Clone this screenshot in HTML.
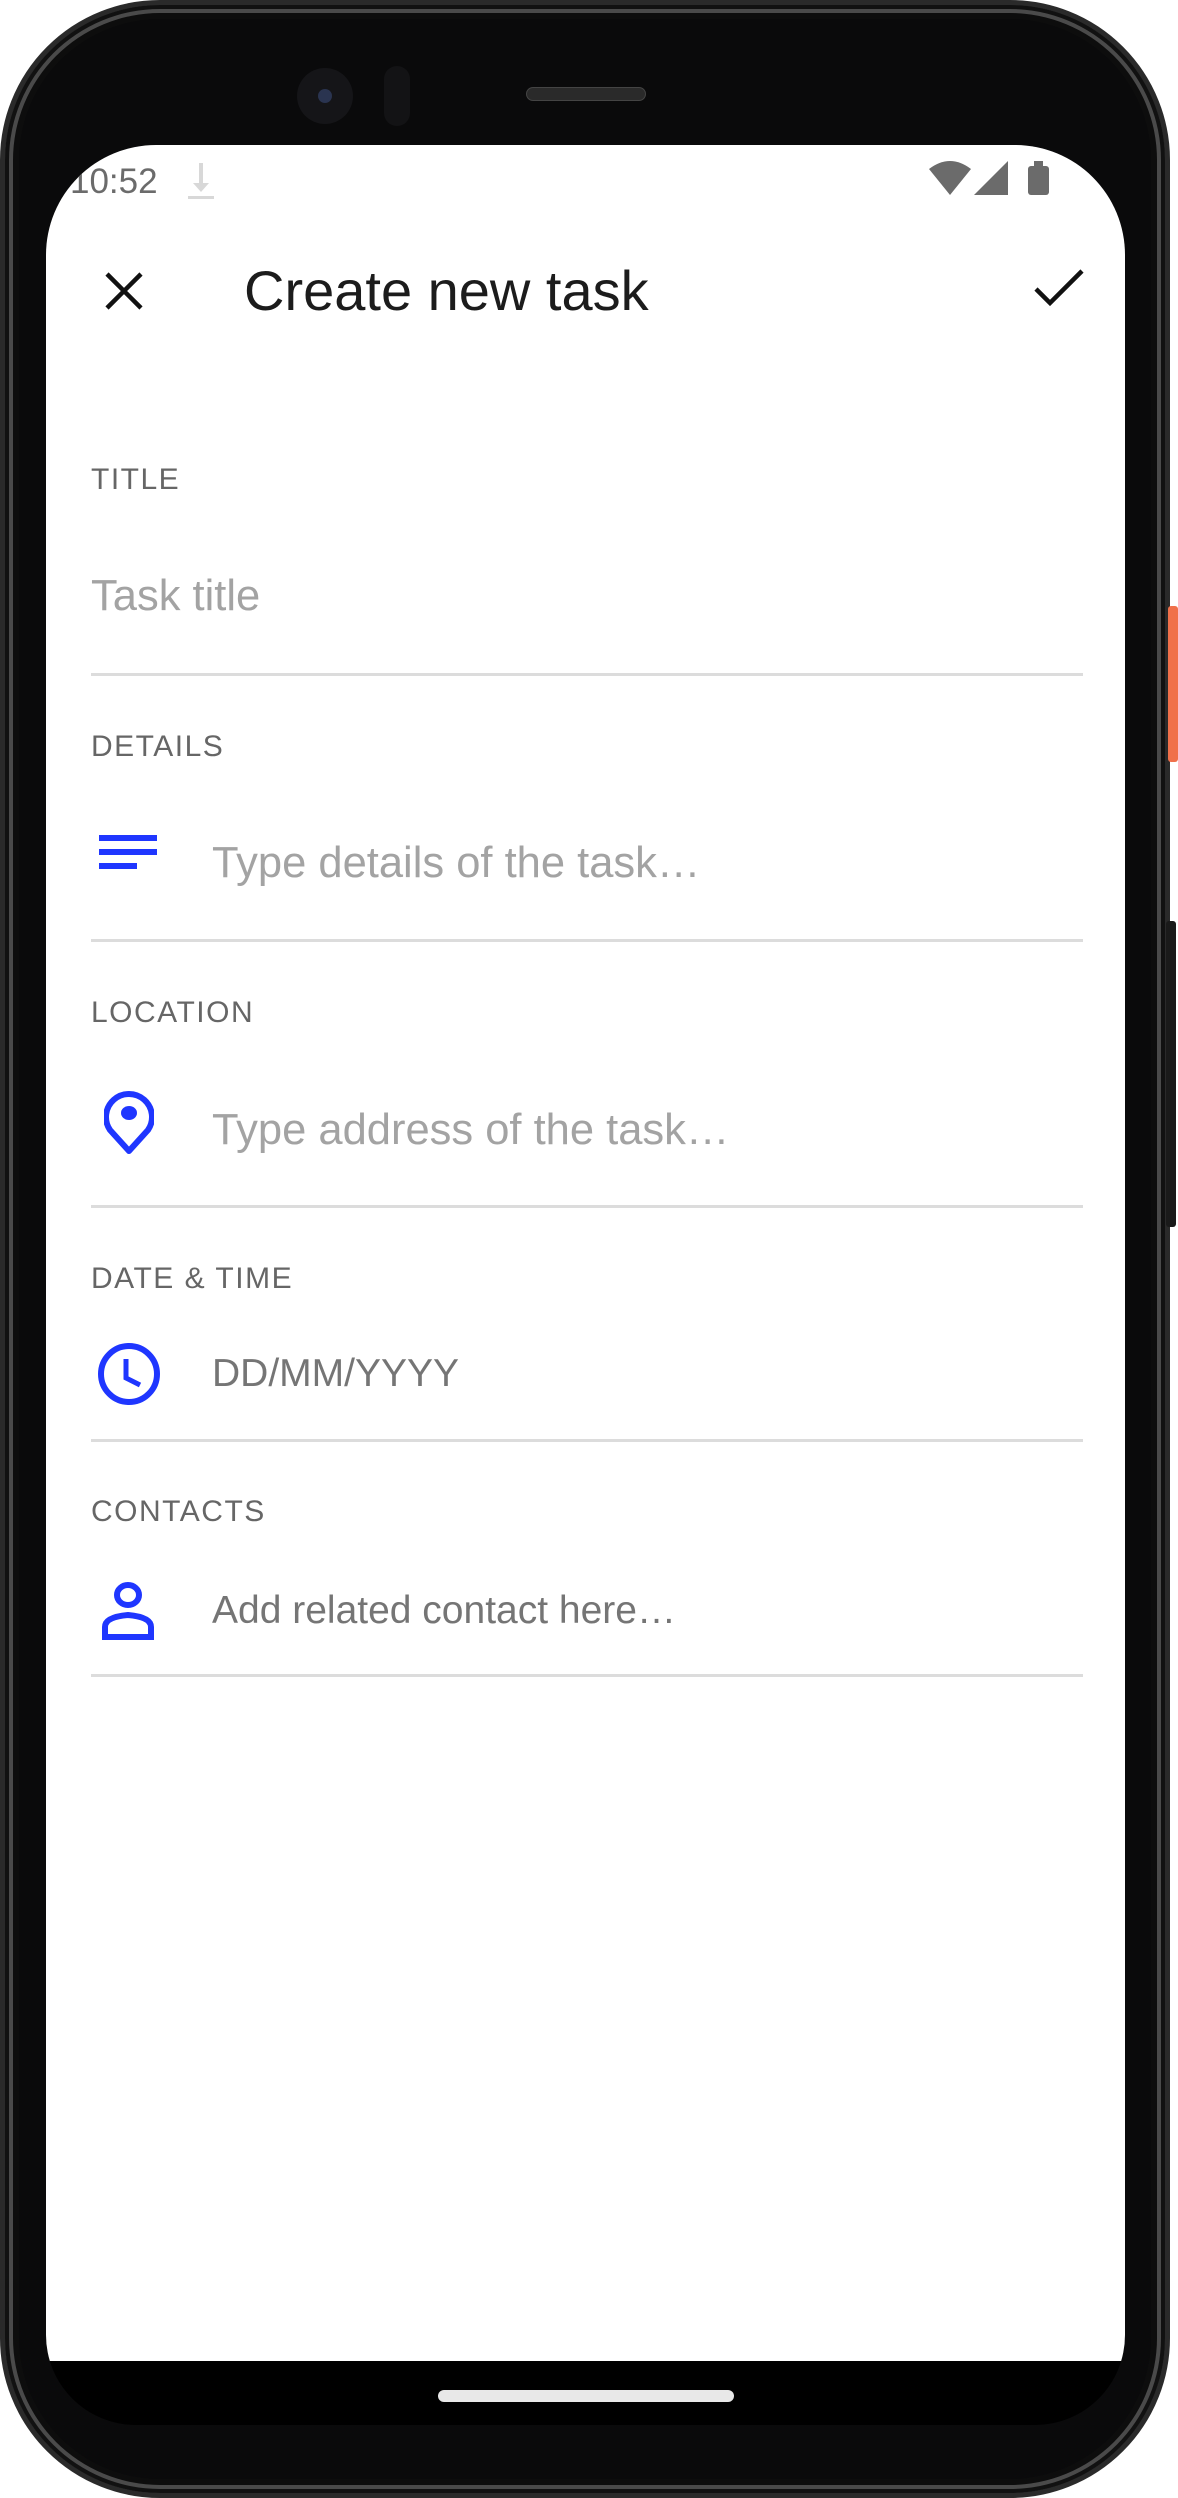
<!DOCTYPE html>
<html><head><style>
*{margin:0;padding:0;box-sizing:border-box}
body{width:1178px;height:2498px;background:#fff;position:relative;overflow:hidden;font-family:"Liberation Sans",sans-serif}
.abs{position:absolute}
.phone{left:0;top:0;width:1170px;height:2498px;border-radius:160px;background:#0a0a0b;border:5px solid #2a2a2a;box-shadow:inset 0 0 0 4px #111,inset 0 0 0 8px #4a4a4a,inset 0 0 0 14px #0d0d0d}
.screen{left:46px;top:145px;width:1079px;height:2280px;border-radius:110px 110px 90px 90px;background:#000;overflow:hidden}
.white{left:0;top:0;width:1079px;height:2216px;background:#fff}
.lbl{left:45px;font-size:30px;color:#666;letter-spacing:1.5px}
.ph{font-size:43.5px;color:#a3a3a3}
.val{font-size:39px;color:#757575}
.div{left:45px;width:992px;height:3px;background:#dcdcdc}
</style></head><body>
<div class="abs phone"></div>
<div class="abs" style="left:1168px;top:606px;width:10px;height:156px;background:#f0704a;border-radius:3px"></div>
<div class="abs" style="left:1166px;top:921px;width:10px;height:306px;background:#1a1a1a;border-radius:3px"></div>
<div class="abs" style="left:297px;top:68px;width:56px;height:56px;border-radius:50%;background:#151518"></div>
<div class="abs" style="left:318px;top:89px;width:14px;height:14px;border-radius:50%;background:#2a3450"></div>
<div class="abs" style="left:384px;top:66px;width:26px;height:60px;border-radius:13px;background:#131315"></div>
<div class="abs" style="left:526px;top:87px;width:120px;height:14px;border-radius:7px;background:#2a2a2a;border:1px solid #444"></div>
<div class="abs screen">
 <div class="abs white">
  <div class="abs" style="left:24px;top:17px;font-size:35px;color:#6b6b6b">10:52</div>
  <svg class="abs" style="left:140px;top:16px" width="30" height="40" viewBox="0 0 30 40"><path d="M13 2h4v20h6l-8 9-8-9h6z" fill="#d8d8d8"/><rect x="2" y="35" width="26" height="3" fill="#d8d8d8"/></svg>
  <svg class="abs" style="left:883px;top:14px" width="125" height="38" viewBox="0 0 125 38"><path d="M0 10 Q21 -6 42 10 L21 36 Z" fill="#6b6b6b"/><path d="M45 36 L79 2 L79 36 Z" fill="#6b6b6b"/><rect x="99" y="7" width="21" height="29" rx="3" fill="#6b6b6b"/><rect x="105" y="2" width="9" height="6" fill="#6b6b6b"/></svg>
  <svg class="abs" style="left:58px;top:126px" width="40" height="40" viewBox="0 0 40 40"><path d="M3 3L37 37M37 3L3 37" stroke="#111" stroke-width="4.5"/></svg>
  <div class="abs" style="left:198px;top:113px;font-size:56px;color:#1c1c1c">Create new task</div>
  <svg class="abs" style="left:988px;top:124px" width="50" height="40" viewBox="0 0 50 40"><path d="M2 20L16 34L48 2" stroke="#111" stroke-width="4.5" fill="none"/></svg>

  <div class="abs lbl" style="top:318px">TITLE</div>
  <div class="abs ph" style="left:45px;top:427px">Task title</div>
  <div class="abs div" style="top:528px"></div>

  <div class="abs lbl" style="top:585px">DETAILS</div>
  <svg class="abs" style="left:53px;top:690px" width="60" height="40" viewBox="0 0 60 40"><rect x="0" y="0" width="58" height="6" fill="#1f36ff"/><rect x="0" y="14" width="58" height="6" fill="#1f36ff"/><rect x="0" y="28" width="38" height="6" fill="#1f36ff"/></svg>
  <div class="abs ph" style="left:166px;top:694px">Type details of the task…</div>
  <div class="abs div" style="top:794px"></div>

  <div class="abs lbl" style="top:851px">LOCATION</div>
  <svg class="abs" style="left:58px;top:946px" width="50" height="66" viewBox="0 0 50 66"><path d="M25 60 L6 39 A23 23 0 1 1 44 39 Z" fill="none" stroke="#1f36ff" stroke-width="6" stroke-linejoin="round"/><ellipse cx="25" cy="22" rx="8" ry="7" fill="#1f36ff"/></svg>
  <div class="abs ph" style="left:166px;top:961px">Type address of the task…</div>
  <div class="abs div" style="top:1060px"></div>

  <div class="abs lbl" style="top:1117px">DATE &amp; TIME</div>
  <svg class="abs" style="left:50px;top:1196px" width="66" height="66" viewBox="0 0 66 66"><circle cx="33" cy="33" r="28" fill="none" stroke="#1f36ff" stroke-width="6"/><path d="M30 18V37L44 44" fill="none" stroke="#1f36ff" stroke-width="5"/></svg>
  <div class="abs val" style="left:166px;top:1207px">DD/MM/YYYY</div>
  <div class="abs div" style="top:1294px"></div>

  <div class="abs lbl" style="top:1350px">CONTACTS</div>
  <svg class="abs" style="left:56px;top:1436px" width="52" height="60" viewBox="0 0 52 60"><ellipse cx="26" cy="14" rx="11" ry="10" fill="none" stroke="#1f36ff" stroke-width="6"/><path d="M3 56V46Q3 36 26 34Q49 36 49 46V56Z" fill="none" stroke="#1f36ff" stroke-width="6"/></svg>
  <div class="abs val" style="left:166px;top:1444px">Add related contact here…</div>
  <div class="abs div" style="top:1529px"></div>
 </div>
 <div class="abs" style="left:392px;top:2245px;width:296px;height:12px;border-radius:6px;background:#e8e8e8"></div>
</div>
</body></html>
